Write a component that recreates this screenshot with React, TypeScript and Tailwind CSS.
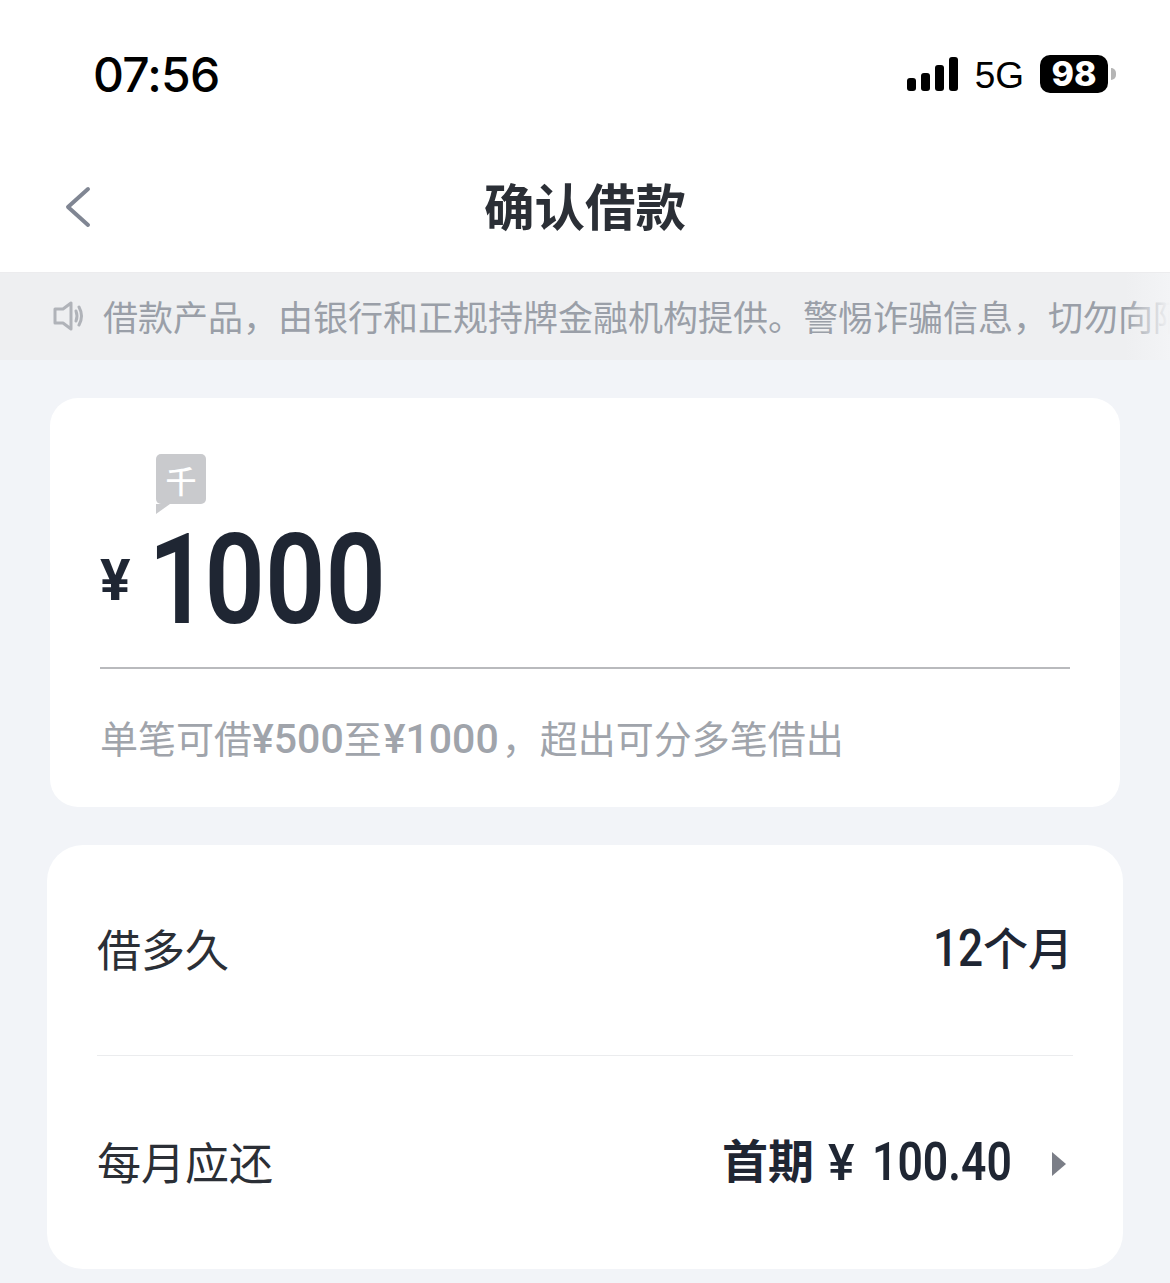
import React from "react";

const cjk = "font-['Noto_Sans_CJK_SC','Noto_Sans',sans-serif]";
const din = "font-['Roboto','Noto_Sans_CJK_SC',sans-serif]";

const StatusBar: React.FC = () => (
  <div className="flex h-[130px] items-start justify-between pl-[93px] pr-[54px]">
    <span className="mt-[43px] font-['Inter',sans-serif] text-[48px] font-medium leading-[64px] tracking-[-0.8px] text-black">
      07:56
    </span>
    <div className="mt-[55px] flex h-[38px] items-center">
      <svg width="52" height="36" viewBox="0 0 52 36" className="mr-[16px]" fill="#000">
        <rect x="0" y="22" width="9" height="13" rx="3" />
        <rect x="14" y="17" width="9" height="18" rx="3" />
        <rect x="28" y="9" width="9" height="26" rx="3" />
        <rect x="42" y="1" width="9" height="34" rx="3" />
      </svg>
      <span className="mr-[16px] mt-[3px] font-['Liberation_Sans',sans-serif] text-[37px] leading-[38px] text-black">5G</span>
      <div className="flex h-[38px] w-[68px] items-center justify-center rounded-[10px] bg-black font-['Inter',sans-serif] text-[34px] font-extrabold leading-none text-white">
        98
      </div>
      <div className="ml-[3px] h-[12px] w-[5px] rounded-r-full bg-[#b5b5b5]" />
    </div>
  </div>
);

const NavBar: React.FC = () => (
  <div className="relative flex h-[143px] items-start justify-center border-b border-[#ececee]">
    <svg width="30" height="46" viewBox="0 0 30 46" className="absolute left-[64px] top-[54px]" fill="none" stroke="#808693" strokeWidth="4" strokeLinecap="round" strokeLinejoin="round">
      <path d="M24 5 L4 23 L24 41" />
    </svg>
    <h1 className={`${cjk} mt-[39px] text-[50.5px] font-bold leading-[70px] text-[#2b2f36]`}>确认借款</h1>
  </div>
);

const Notice: React.FC = () => (
  <div className="relative flex h-[87px] items-center overflow-hidden bg-[#eeeff1] pb-[2px] pl-[52px]">
    <svg width="32" height="30" viewBox="0 0 32 30" className="mr-[19px] shrink-0" fill="none" stroke="#b0b3b9" strokeWidth="3" strokeLinejoin="round" strokeLinecap="round">
      <path d="M3 8 H11 L19 2 V28 L11 22 H3 Z" />
      <path d="M24 10 Q26 15 24 20" />
      <path d="M27 6 Q32 15 27 24" />
    </svg>
    <span className={`${cjk} whitespace-nowrap text-[35px] leading-[50px] text-[#9a9fa8]`}>
      借款产品，由银行和正规持牌金融机构提供。警惕诈骗信息，切勿向陌
    </span>
    <div className="absolute inset-y-0 right-0 w-[45px] bg-gradient-to-r from-[#f1f2f4]/0 to-[#f3f4f6]" />
  </div>
);

const AmountCard: React.FC = () => (
  <div className="relative mx-[50px] mt-[38px] h-[409px] rounded-[28px] bg-white px-[50px]">
    <div className="absolute left-[106px] top-[56px]">
      <div className={`${cjk} flex h-[50px] w-[50px] items-center justify-center rounded-[5px] bg-[#c9cacd] text-[31px] font-medium leading-none text-white`}>
        千
      </div>
      <svg width="14" height="10" viewBox="0 0 14 10" className="block" fill="#c9cacd">
        <path d="M0 0 H14 L0 10 Z" />
      </svg>
    </div>
    <div className="flex h-[271px] items-end border-b-2 border-[#b9babd] pb-[22px]">
      <span className="mb-[34px] w-[44px] font-['Roboto',sans-serif] text-[57px] font-bold leading-[60px] text-[#1f2633]">¥</span>
      <span className={`${din} inline-block origin-left scale-x-[0.84] text-[126px] font-semibold leading-[130px] text-[#1f2633]`}>
        <span className="inline-block translate-x-[5px]">1</span>000
      </span>
    </div>
    <p className={`${cjk} mt-[42px] flex items-baseline whitespace-nowrap text-[38px] leading-[52px] text-[#a0a4ab]`}>
      <span>单笔可借</span>
      <span className={`${din} text-[41px] font-medium`}>¥500</span>
      <span className="mr-[2px]">至</span>
      <span className={`${din} text-[41px] font-medium`}>¥1000</span>
      <span className="ml-[3px]">，超出可分多笔借出</span>
    </p>
  </div>
);

const TermsCard: React.FC = () => (
  <div className="mx-[47px] mt-[38px] h-[424px] rounded-[36px] bg-white px-[50px]">
    <div className="flex h-[211px] items-center justify-between border-b border-[#ebecee] pb-[5px]">
      <span className={`${cjk} text-[44px] leading-[60px] text-[#2b2f36]`}>借多久</span>
      <span className={`${cjk} flex items-baseline text-[45px] font-medium leading-[60px] text-[#1f2633]`}>
        <span className="inline-block w-[50px]">
          <span className={`${din} inline-block origin-left scale-x-[0.85] text-[52px] font-medium`}>12</span>
        </span>
        个月
      </span>
    </div>
    <div className="flex h-[213px] items-center justify-between pb-[3px]">
      <span className={`${cjk} text-[44px] leading-[60px] text-[#2b2f36]`}>每月应还</span>
      <div className="flex items-center pr-[7px]">
        <span className={`${cjk} flex items-baseline pb-[4px] text-[46px] font-bold leading-[60px] text-[#1f2633]`}>
          首期
          <span className={`${din} ml-[14px] w-[44px] translate-y-[2px] text-[50px] font-medium`}>¥</span>
          <span className="inline-block w-[138px]">
            <span className={`${din} inline-block origin-left translate-y-[2px] scale-x-[0.84] text-[53px] font-semibold`}>100.40</span>
          </span>
        </span>
        <svg width="14" height="24" viewBox="0 0 14 24" className="ml-[42px] mt-[6px]" fill="#7b7e87">
          <path d="M0 0 L14 12 L0 24 Z" />
        </svg>
      </div>
    </div>
  </div>
);

export default function App() {
  return (
    <div className="h-[1283px] w-[1170px] overflow-hidden bg-[#f2f4f8]">
      <div className="bg-white">
        <StatusBar />
        <NavBar />
      </div>
      <Notice />
      <AmountCard />
      <TermsCard />
    </div>
  );
}
